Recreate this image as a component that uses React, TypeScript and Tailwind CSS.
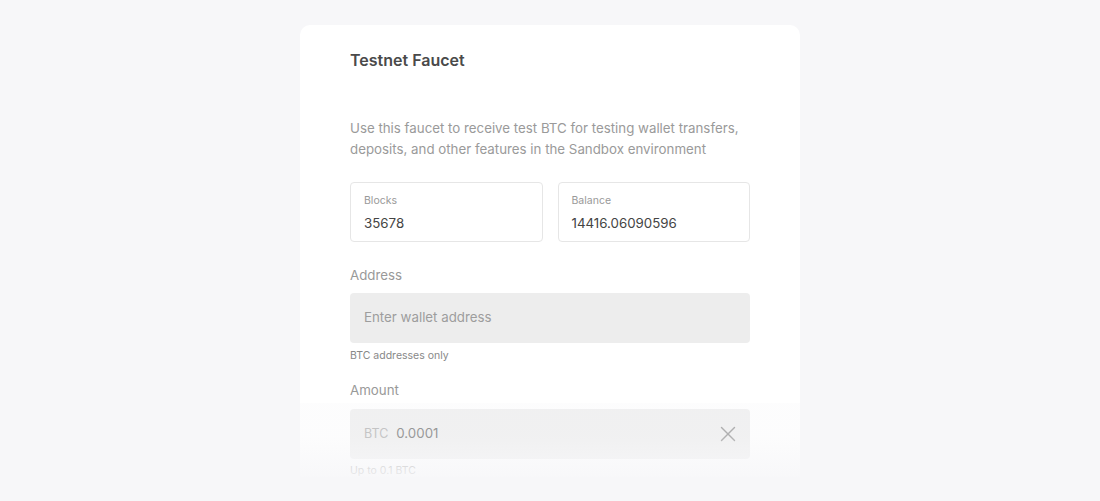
import { X } from 'lucide-react'

function Stat({ label, value }: { label: string; value: string }) {
  return (
    <div className="flex-1 h-[60px] border border-[#e6e6e6] rounded-[4px] px-[13px] pt-[11px]">
      <div className="text-[10.5px] leading-[14px] text-[#999]">{label}</div>
      <div className="mt-[6px] text-[13.3px] leading-[18px] text-[#444]">{value}</div>
    </div>
  )
}

export default function App() {
  return (
    <div
      className="min-h-[501px] bg-[#f7f7f9] flex justify-center pt-[25px]"
      style={{ fontFamily: 'Inter, "Noto Sans", sans-serif' }}
    >
      <div className="relative w-[500px] h-[452px] bg-white rounded-t-[10px] px-[50px] pt-[25px]">
        <h1 className="text-[16px] leading-[20px] font-semibold text-[#4a4a4a]">Testnet Faucet</h1>

        <p className="mt-[48px] text-[13.3px] leading-[21px] text-[#9a9a9a]">
          Use this faucet to receive test BTC for testing wallet transfers, deposits, and other features in the Sandbox environment
        </p>

        {/* stats */}
        <div className="mt-[22px] flex gap-[15px]">
          <Stat label="Blocks" value="35678" />
          <Stat label="Balance" value="14416.06090596" />
        </div>

        {/* address */}
        <div className="mt-[24px] text-[13.3px] leading-[18px] text-[#999]">Address</div>
        <div className="mt-[9px] h-[50px] rounded-[4px] bg-[#ededed] flex items-center px-[14px] text-[13.3px] text-[#9d9d9d]">
          Enter wallet address
        </div>
        <div className="mt-[6px] text-[10.5px] leading-[14px] text-[#888]">BTC addresses only</div>

        {/* amount */}
        <div className="mt-[18px] text-[13.3px] leading-[18px] text-[#999]">Amount</div>
        <div className="mt-[10px] h-[50px] rounded-[4px] bg-[#ededed] flex items-center pl-[14px] pr-[9px]">
          <span className="text-[12.5px] text-[#aaa]">BTC</span>
          <span className="ml-[8px] text-[13.3px] text-[#666]">0.0001</span>
          <X className="ml-auto w-[26px] h-[26px] text-[#8a8a8a]" strokeWidth={1.3} />
        </div>
        <div className="mt-[6px] text-[10.5px] leading-[12px] text-[#888]">Up to 0.1 BTC</div>

        {/* fade */}
        <div className="absolute left-0 right-0 bottom-0 h-[74px] bg-[linear-gradient(to_bottom,rgba(247,247,249,0.3),rgba(247,247,249,0.35)_45%,rgba(247,247,249,0.9))]" />
      </div>
    </div>
  )
}
